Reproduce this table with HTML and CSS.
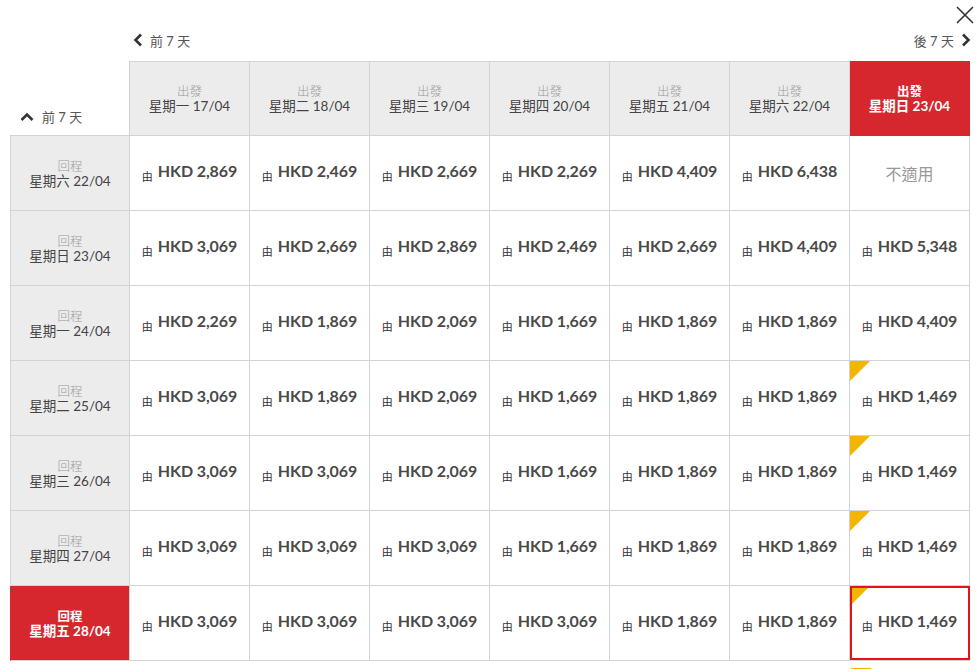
FILE: index.html
```html
<!DOCTYPE html>
<html lang="zh-Hant">
<head>
<meta charset="utf-8">
<link rel="stylesheet" href="styles.css">
</head>
<body>
<div class="page">
  <button class="close" aria-label="close">
    <svg width="18" height="18" viewBox="0 0 18 18"><path d="M1 1 L17 17 M17 1 L1 17" stroke="#333" stroke-width="1.6" fill="none"/></svg>
  </button>
  <div class="nav">
    <a class="nav-prev"><svg width="10" height="14" viewBox="0 0 10 14"><path d="M8 1.5 L2.5 7 L8 12.5" stroke="#333" stroke-width="2.6" fill="none"/></svg><span>前 7 天</span></a>
    <a class="nav-next"><span>後 7 天</span><svg width="10" height="14" viewBox="0 0 10 14"><path d="M2 1.5 L7.5 7 L2 12.5" stroke="#333" stroke-width="2.6" fill="none"/></svg></a>
  </div>
  <div class="grid">
    <div class="corner"><a class="nav-up"><svg width="14" height="10" viewBox="0 0 14 10"><path d="M1.5 8 L7 2.5 L12.5 8" stroke="#333" stroke-width="2.6" fill="none"/></svg><span>前 7 天</span></a></div>
    <div class="head"><span class="lbl">出發</span><span class="dt">星期一 17/04</span></div>
    <div class="head"><span class="lbl">出發</span><span class="dt">星期二 18/04</span></div>
    <div class="head"><span class="lbl">出發</span><span class="dt">星期三 19/04</span></div>
    <div class="head"><span class="lbl">出發</span><span class="dt">星期四 20/04</span></div>
    <div class="head"><span class="lbl">出發</span><span class="dt">星期五 21/04</span></div>
    <div class="head"><span class="lbl">出發</span><span class="dt">星期六 22/04</span></div>
    <div class="head sel"><span class="lbl">出發</span><span class="dt">星期日 23/04</span></div>

    <div class="rowh"><span class="lbl">回程</span><span class="dt">星期六 22/04</span></div>
    <div class="cell"><span class="from">由</span><span class="price">HKD 2,869</span></div>
    <div class="cell"><span class="from">由</span><span class="price">HKD 2,469</span></div>
    <div class="cell"><span class="from">由</span><span class="price">HKD 2,669</span></div>
    <div class="cell"><span class="from">由</span><span class="price">HKD 2,269</span></div>
    <div class="cell"><span class="from">由</span><span class="price">HKD 4,409</span></div>
    <div class="cell"><span class="from">由</span><span class="price">HKD 6,438</span></div>
    <div class="cell"><span class="na">不適用</span></div>

    <div class="rowh"><span class="lbl">回程</span><span class="dt">星期日 23/04</span></div>
    <div class="cell"><span class="from">由</span><span class="price">HKD 3,069</span></div>
    <div class="cell"><span class="from">由</span><span class="price">HKD 2,669</span></div>
    <div class="cell"><span class="from">由</span><span class="price">HKD 2,869</span></div>
    <div class="cell"><span class="from">由</span><span class="price">HKD 2,469</span></div>
    <div class="cell"><span class="from">由</span><span class="price">HKD 2,669</span></div>
    <div class="cell"><span class="from">由</span><span class="price">HKD 4,409</span></div>
    <div class="cell"><span class="from">由</span><span class="price">HKD 5,348</span></div>

    <div class="rowh"><span class="lbl">回程</span><span class="dt">星期一 24/04</span></div>
    <div class="cell"><span class="from">由</span><span class="price">HKD 2,269</span></div>
    <div class="cell"><span class="from">由</span><span class="price">HKD 1,869</span></div>
    <div class="cell"><span class="from">由</span><span class="price">HKD 2,069</span></div>
    <div class="cell"><span class="from">由</span><span class="price">HKD 1,669</span></div>
    <div class="cell"><span class="from">由</span><span class="price">HKD 1,869</span></div>
    <div class="cell"><span class="from">由</span><span class="price">HKD 1,869</span></div>
    <div class="cell"><span class="from">由</span><span class="price">HKD 4,409</span></div>

    <div class="rowh"><span class="lbl">回程</span><span class="dt">星期二 25/04</span></div>
    <div class="cell"><span class="from">由</span><span class="price">HKD 3,069</span></div>
    <div class="cell"><span class="from">由</span><span class="price">HKD 1,869</span></div>
    <div class="cell"><span class="from">由</span><span class="price">HKD 2,069</span></div>
    <div class="cell"><span class="from">由</span><span class="price">HKD 1,669</span></div>
    <div class="cell"><span class="from">由</span><span class="price">HKD 1,869</span></div>
    <div class="cell"><span class="from">由</span><span class="price">HKD 1,869</span></div>
    <div class="cell low"><span class="from">由</span><span class="price">HKD 1,469</span></div>

    <div class="rowh"><span class="lbl">回程</span><span class="dt">星期三 26/04</span></div>
    <div class="cell"><span class="from">由</span><span class="price">HKD 3,069</span></div>
    <div class="cell"><span class="from">由</span><span class="price">HKD 3,069</span></div>
    <div class="cell"><span class="from">由</span><span class="price">HKD 2,069</span></div>
    <div class="cell"><span class="from">由</span><span class="price">HKD 1,669</span></div>
    <div class="cell"><span class="from">由</span><span class="price">HKD 1,869</span></div>
    <div class="cell"><span class="from">由</span><span class="price">HKD 1,869</span></div>
    <div class="cell low"><span class="from">由</span><span class="price">HKD 1,469</span></div>

    <div class="rowh"><span class="lbl">回程</span><span class="dt">星期四 27/04</span></div>
    <div class="cell"><span class="from">由</span><span class="price">HKD 3,069</span></div>
    <div class="cell"><span class="from">由</span><span class="price">HKD 3,069</span></div>
    <div class="cell"><span class="from">由</span><span class="price">HKD 3,069</span></div>
    <div class="cell"><span class="from">由</span><span class="price">HKD 1,669</span></div>
    <div class="cell"><span class="from">由</span><span class="price">HKD 1,869</span></div>
    <div class="cell"><span class="from">由</span><span class="price">HKD 1,869</span></div>
    <div class="cell low"><span class="from">由</span><span class="price">HKD 1,469</span></div>

    <div class="rowh sel"><span class="lbl">回程</span><span class="dt">星期五 28/04</span></div>
    <div class="cell"><span class="from">由</span><span class="price">HKD 3,069</span></div>
    <div class="cell"><span class="from">由</span><span class="price">HKD 3,069</span></div>
    <div class="cell"><span class="from">由</span><span class="price">HKD 3,069</span></div>
    <div class="cell"><span class="from">由</span><span class="price">HKD 3,069</span></div>
    <div class="cell"><span class="from">由</span><span class="price">HKD 1,869</span></div>
    <div class="cell"><span class="from">由</span><span class="price">HKD 1,869</span></div>
    <div class="cell low picked"><span class="from">由</span><span class="price">HKD 1,469</span></div>
  </div>
  <div class="legend"><span class="swatch"></span></div>
</div>
</body>
</html>
```

FILE: styles.css
```css
* { box-sizing: border-box; }
html, body { margin: 0; padding: 0; background: #fff; }
body {
  font-family: Lato, "Noto Sans CJK TC", sans-serif;
  color: #444;
  overflow: hidden;
}
.page {
  position: relative;
  width: 980px;
  padding: 31px 10px 0 10px;
}
.close {
  position: absolute;
  top: 6px;
  right: 6px;
  width: 18px;
  height: 18px;
  padding: 0;
  border: 0;
  background: none;
}
.close svg { display: block; }
.nav {
  display: flex;
  justify-content: space-between;
  align-items: center;
  height: 18px;
  margin-left: 123px;
  margin-bottom: 12px;
  font-size: 13px;
  color: #555;
}
.nav a { display: flex; align-items: center; gap: 7px; }
.nav-next { margin-right: -1px; }
.grid {
  display: grid;
  grid-template-columns: 120px repeat(7, 120px);
  grid-auto-rows: 75px;
}
.corner {
  border-right: 1px solid #d3d3d3;
  border-bottom: 1px solid #d3d3d3;
  display: flex;
  align-items: flex-end;
  padding: 0 0 9px 10px;
}
.nav-up { display: flex; align-items: center; gap: 8px; font-size: 13px; color: #555; }
.head, .rowh {
  background: #ececec;
  border-right: 1px solid #d3d3d3;
  border-bottom: 1px solid #d3d3d3;
  display: flex;
  flex-direction: column;
  align-items: center;
  justify-content: center;
  padding-top: 1px;
  line-height: 14px;
}
.head { border-top: 1px solid #d3d3d3; }
.rowh { border-left: 1px solid #d3d3d3; }
.lbl { display: block; height: 14px; font-size: 12.5px; font-weight: 300; color: #9a9a9a; }
.dt { display: block; height: 14px; font-size: 13.5px; color: #444; }
.head.sel {
  background: #d7272e;
  border-color: #d7272e;
}
.rowh.sel {
  background: #d7272e;
  border-left-color: #d7272e;
}
.sel .lbl, .sel .dt { color: #fff; font-weight: 700; }
.cell {
  position: relative;
  border-right: 1px solid #d3d3d3;
  border-bottom: 1px solid #d3d3d3;
  display: flex;
  align-items: center;
  justify-content: center;
  gap: 5px;
  padding-bottom: 5px;
}
.from { font-size: 11px; color: #333; margin-top: 10px; }
.price { font-size: 16px; font-weight: 700; color: #4a4a4a; letter-spacing: -0.1px; }
.na { font-size: 16px; color: #999; padding-top: 5px; }
.low::before {
  content: "";
  position: absolute;
  top: 0;
  left: 0;
  width: 20px;
  height: 20px;
  background: #f2b500;
  clip-path: polygon(0 0, 100% 0, 0 100%);
}
.picked::after {
  content: "";
  position: absolute;
  top: 0;
  left: 0;
  right: -1px;
  bottom: 0;
  border: 2px solid #e0141b;
}
.legend {
  display: flex;
  justify-content: flex-end;
  padding: 7px 99px 0 0;
}
.swatch { display: block; width: 20px; height: 20px; background: #f2b500; }
```
